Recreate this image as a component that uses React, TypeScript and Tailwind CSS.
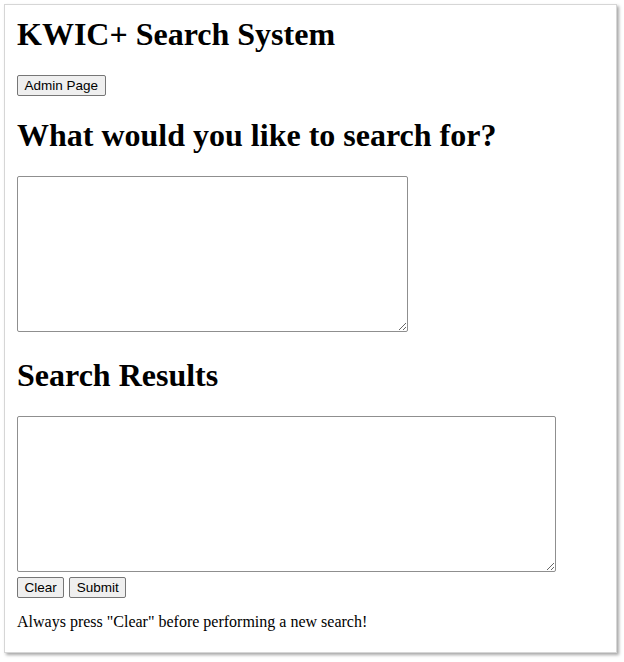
export default function App() {
  const btn =
    "h-[21px] px-[6.5px] text-[13.5px] leading-none text-black bg-[#efefef] border border-[#767676] rounded-[2px] [font-family:'Liberation_Sans',Arial,sans-serif]";
  return (
    <div className="w-[624px] h-[662px] bg-white pt-[4px] pl-[4px]">
      <div className="w-[613px] h-[649px] bg-white border border-[#d6d6d6] shadow-[2px_2px_3px_rgba(0,0,0,0.35)] pl-[12px] pt-[11px] [font-family:'Liberation_Serif','Times_New_Roman',serif] text-black">
        <h1 className="text-[32px] font-bold leading-[36px]">KWIC+ Search System</h1>
        <div className="flex mt-[23px]">
          <button className={btn}>Admin Page</button>
        </div>
        <h2 className="mt-[21px] text-[32px] font-bold leading-[36px]">What would you like to search for?</h2>
        <textarea className="block mt-[23px] w-[391px] h-[156px] border border-[#8f8f8f] rounded-[2px] resize-y bg-white" />
        <h2 className="mt-[25px] text-[32px] font-bold leading-[36px]">Search Results</h2>
        <textarea className="block mt-[23px] w-[539px] h-[156px] border border-[#8f8f8f] rounded-[2px] resize-y bg-white" />
        <div className="flex gap-[5px] mt-[5px]">
          <button className={btn}>Clear</button>
          <button className={btn}>Submit</button>
        </div>
        <p className="mt-[15px] text-[16px] leading-[18px]">Always press "Clear" before performing a new search!</p>
      </div>
    </div>
  );
}
